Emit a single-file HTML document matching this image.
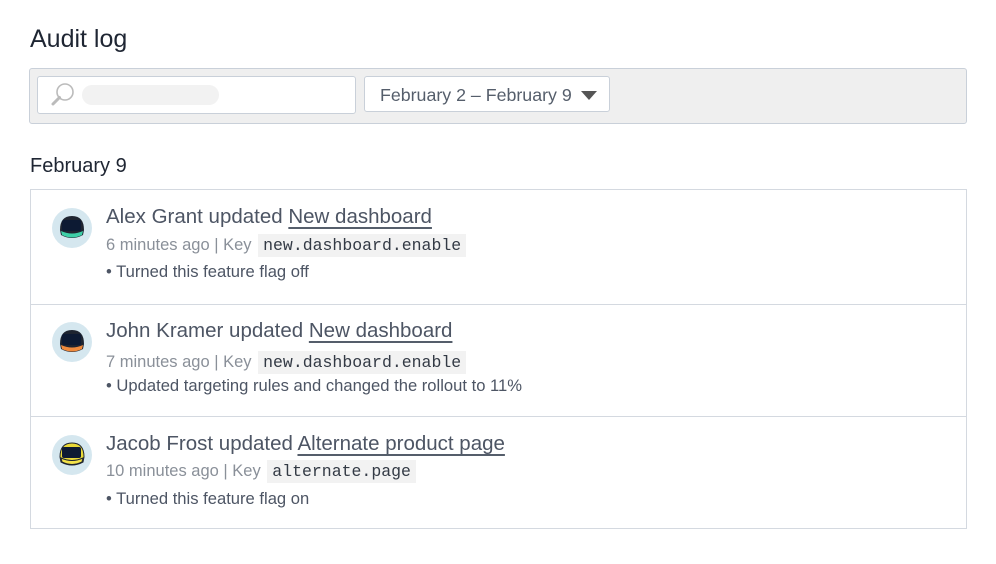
<!DOCTYPE html>
<html><head><style>
body{margin:0;background:#fff;font-family:"Liberation Sans",sans-serif;color:#2b3240;width:996px;height:564px;overflow:hidden;position:relative}
.abs{position:absolute}
h1{position:absolute;left:30px;top:25px;margin:0;font-weight:normal;font-size:25px;color:#1f2633}
.bar{left:29px;top:68px;width:936px;height:54px;background:#efefef;border:1px solid #c9d0d9;border-radius:3px}
.search{left:37px;top:76px;width:317px;height:36px;background:#fff;border:1px solid #c9d0d9;border-radius:3px}
.pill{left:82px;top:85px;width:137px;height:20px;background:#f2f2f2;border-radius:10px}
.date{left:364px;top:76px;width:246px;height:36px;background:#fff;border:1px solid #c9d0d9;border-radius:3px;font-size:17.8px;color:#555e6b;line-height:36px;padding-left:15px;box-sizing:border-box}
.tri{left:581px;top:91px;width:0;height:0;border-left:8px solid transparent;border-right:8px solid transparent;border-top:9px solid #555}
h2{position:absolute;left:30px;top:155px;margin:0;font-weight:normal;font-size:20px;color:#1f2633}
.list{left:30px;top:189px;width:935px;height:338px;border:1px solid #d4d9e0}
.row{position:absolute;left:0;width:935px;border-top:1px solid #d4d9e0}
.av{position:absolute;left:21px;width:40px;height:40px;border-radius:50%;background:#d5e7ef}
.t1{position:absolute;left:75px;font-size:20.5px;color:#4d5564}
.t1 u{text-decoration-color:#555e6b;text-underline-offset:4px}
.t2{position:absolute;left:75px;font-size:16.5px;color:#8a9099}
.t2 code{font-family:"Liberation Mono",monospace;background:#f2f2f2;color:#333a45;padding:2px 5px;font-size:16.5px;margin-left:2px}
.t3{position:absolute;left:75px;font-size:16.6px;color:#4d5564}
</style></head><body>
<h1>Audit log</h1>
<div class="abs bar"></div>
<div class="abs search"></div>
<svg class="abs" style="left:50px;top:82px" width="26" height="26" viewBox="0 0 26 26"><circle cx="15" cy="10" r="8" fill="none" stroke="#bbb" stroke-width="1.6"/><path d="M9.5 15.5 L3 22" stroke="#bbb" stroke-width="3" stroke-linecap="round"/></svg>
<div class="abs pill"></div>
<div class="abs date">February 2 – February 9</div>
<div class="abs tri"></div>
<h2>February 9</h2>
<div class="abs list">
 <div class="row" style="top:-1px;border-top:none;height:114px">
  <div class="av" style="top:19px"><svg width="40" height="40"><path d="M8 22 Q8 8 20 8 Q32 8 32 22 L31 27 Q20 33 9 27Z" fill="#1e2430"/><rect x="10" y="12" width="19" height="11" rx="2" fill="#0d1a33"/><path d="M9 23 Q20 28 31 23 L30 27 Q20 32 10 27Z" fill="#3ecfa7"/></svg></div>
  <div class="t1" style="top:16px">Alex Grant updated <u>New dashboard</u></div>
  <div class="t2" style="top:47px">6 minutes ago | Key <code>new.dashboard.enable</code></div>
  <div class="t3" style="top:73px">• Turned this feature flag off</div>
 </div>
 <div class="row" style="top:114px;height:112px">
  <div class="av" style="top:17px"><svg width="40" height="40"><path d="M8 22 Q8 8 20 8 Q32 8 32 22 L31 27 Q20 33 9 27Z" fill="#1e2430"/><rect x="10" y="12" width="19" height="11" rx="2" fill="#0d1a33"/><path d="M9 23 Q20 28 31 23 L30 27 Q20 32 10 27Z" fill="#f08a3c"/></svg></div>
  <div class="t1" style="top:14px">John Kramer updated <u>New dashboard</u></div>
  <div class="t2" style="top:48px">7 minutes ago | Key <code>new.dashboard.enable</code></div>
  <div class="t3" style="top:71px">• Updated targeting rules and changed the rollout to 11%</div>
 </div>
 <div class="row" style="top:226px;height:112px">
  <div class="av" style="top:18px"><svg width="40" height="40"><path d="M8 22 Q8 8 20 8 Q32 8 32 22 L31 27 Q20 33 9 27Z" fill="#e8d838" stroke="#1e2430" stroke-width="1"/><rect x="10" y="12" width="19" height="11" rx="2" fill="#0d1a33"/><path d="M9 23 Q20 28 31 23 L30 27 Q20 32 10 27Z" fill="#f3e24a" stroke="#1e2430" stroke-width="1"/></svg></div>
  <div class="t1" style="top:15px">Jacob Frost updated <u>Alternate product page </u></div>
  <div class="t2" style="top:45px">10 minutes ago | Key <code>alternate.page</code></div>
  <div class="t3" style="top:72px">• Turned this feature flag on</div>
 </div>
</div>
</body></html>
